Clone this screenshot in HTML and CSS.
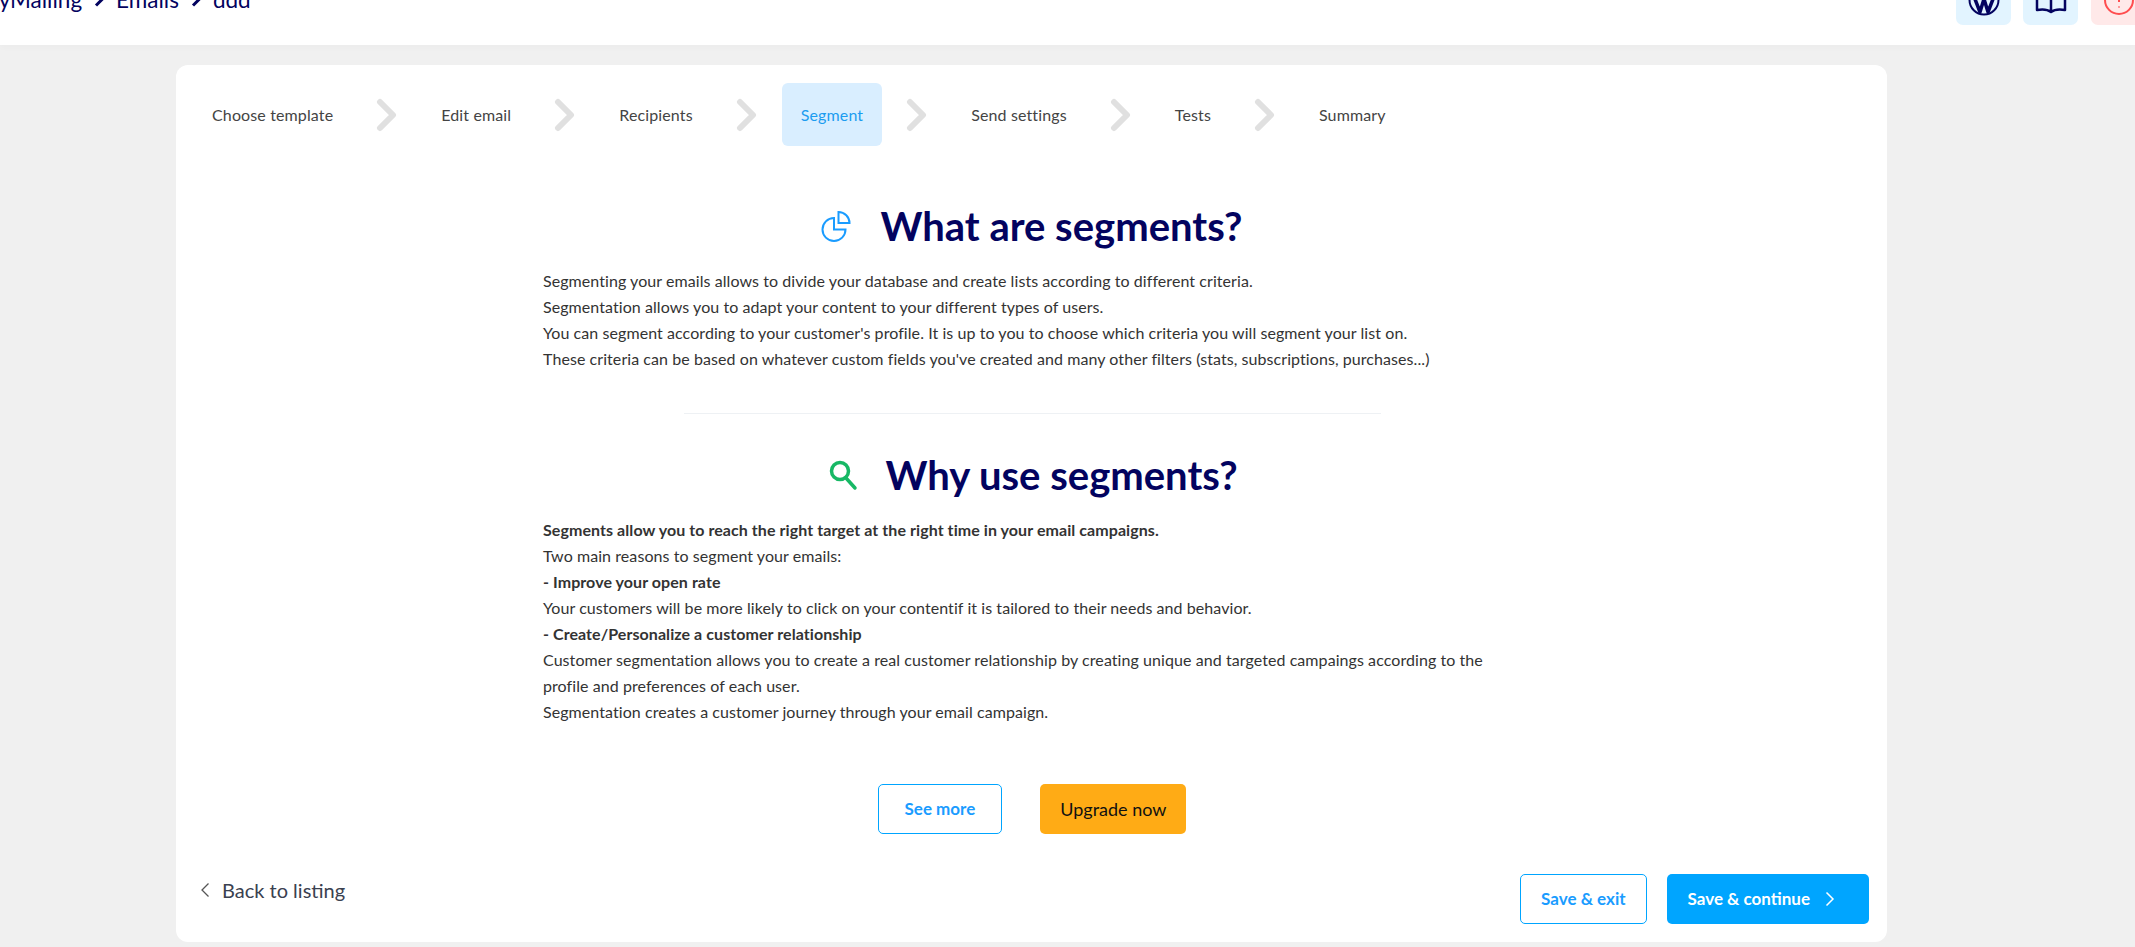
FILE: index.html
```html
<!DOCTYPE html>
<html lang="en">
<head>
    <meta charset="UTF-8">
    <title>Segment</title>
    <link rel="stylesheet" href="styles.css">
</head>
<body>

<header class="topbar">
    <div class="crumbs">
        <span>MyMailing</span>
        <svg class="crumb-sep" viewBox="0 0 10 14"><path d="M2 1.5 7.5 7 2 12.5"/></svg>
        <span>Emails</span>
        <svg class="crumb-sep" viewBox="0 0 10 14"><path d="M2 1.5 7.5 7 2 12.5"/></svg>
        <span>ddd</span>
    </div>
    <div class="top-actions">
        <a class="top-btn">
            <svg viewBox="0 0 32 32" class="ico-navy">
                <circle cx="16" cy="16" r="14.5"/>
                <path class="wp" d="M5 10 12 28 16 15 20 28 27 10M8 10h7M18 10h6"/>
            </svg>
        </a>
        <a class="top-btn">
            <svg viewBox="0 0 32 32" class="ico-navy">
                <path class="thick" d="M16 7C12 3 6 3 2 4v22c5-1 10-1 14 2 4-3 9-3 14-2V4c-4-1-10-1-14 3zM16 7v21"/>
            </svg>
        </a>
        <a class="top-btn top-btn-red">
            <svg viewBox="0 0 32 32" class="ico-red">
                <circle cx="16" cy="16" r="14"/>
                <path class="dots" d="M16 9v9M16 22.5v1"/>
            </svg>
        </a>
    </div>
</header>

<main class="card">
    <nav class="steps">
        <div class="step">Choose template</div>
        <svg class="step-sep" viewBox="0 0 22 34"><path d="M4 4 17 17 4 30"/></svg>
        <div class="step">Edit email</div>
        <svg class="step-sep" viewBox="0 0 22 34"><path d="M4 4 17 17 4 30"/></svg>
        <div class="step">Recipients</div>
        <svg class="step-sep" viewBox="0 0 22 34"><path d="M4 4 17 17 4 30"/></svg>
        <div class="step step-active">Segment</div>
        <svg class="step-sep" viewBox="0 0 22 34"><path d="M4 4 17 17 4 30"/></svg>
        <div class="step">Send settings</div>
        <svg class="step-sep" viewBox="0 0 22 34"><path d="M4 4 17 17 4 30"/></svg>
        <div class="step">Tests</div>
        <svg class="step-sep" viewBox="0 0 22 34"><path d="M4 4 17 17 4 30"/></svg>
        <div class="step">Summary</div>
    </nav>

    <section class="intro">
        <h2 class="intro-title">
            <svg class="title-icon" viewBox="0 0 30 32">
                <path class="ico-blue" d="M13 8A11.5 11.5 0 1 0 24.500 19.500H13Z"/>
                <path class="ico-blue" d="M17.500 2A11 11 0 0 1 28.500 13H17.500Z"/>
            </svg>
            What are segments?
        </h2>
        <p>Segmenting your emails allows to divide your database and create lists according to different criteria.<br>
        Segmentation allows you to adapt your content to your different types of users.<br>
        You can segment according to your customer's profile. It is up to you to choose which criteria you will segment your list on.<br>
        These criteria can be based on whatever custom fields you've created and many other filters (stats, subscriptions, purchases...)</p>

        <hr class="divider">

        <h2 class="intro-title">
            <svg class="title-icon" viewBox="0 0 30 32">
                <circle class="ico-green" cx="14" cy="12" r="8.500"/>
                <path class="ico-green" d="M20 19 29 29"/>
            </svg>
            Why use segments?
        </h2>
        <p><strong>Segments allow you to reach the right target at the right time in your email campaigns.</strong><br>
        Two main reasons to segment your emails:<br>
        <strong>- Improve your open rate</strong><br>
        Your customers will be more likely to click on your contentif it is tailored to their needs and behavior.<br>
        <strong>- Create/Personalize a customer relationship</strong><br>
        Customer segmentation allows you to create a real customer relationship by creating unique and targeted campaings according to the profile and preferences of each user.<br>
        Segmentation creates a customer journey through your email campaign.</p>

        <div class="intro-actions">
            <a class="btn btn-outline btn-more">See more</a>
            <a class="btn btn-orange">Upgrade now</a>
        </div>
    </section>

    <footer class="card-footer">
        <a class="back-link">
            <svg viewBox="0 0 10 16"><path d="M8.500 1.500 2 8l6.500 6.500"/></svg>
            Back to listing
        </a>
        <div class="footer-actions">
            <a class="btn btn-outline btn-exit">Save &amp; exit</a>
            <a class="btn btn-primary">
                Save &amp; continue
                <svg viewBox="0 0 10 16"><path d="M1.500 1.500 8 8l-6.500 6.500"/></svg>
            </a>
        </div>
    </footer>
</main>

</body>
</html>
```

FILE: styles.css
```css
* {
    box-sizing: border-box;
}
html, body {
    height: 100%;
}
body {
    margin: 0;
    overflow: hidden;
    background-color: #f0f0f0;
    color: #333;
    font-family: Lato, "Liberation Sans", sans-serif;
    font-size: 16px;
    line-height: 26px;
}
svg path, svg circle {
    fill: none;
}

.topbar {
    display: flex;
    justify-content: space-between;
    align-items: flex-end;
    height: 45px;
    padding-bottom: 20px;
    background: #fff;
    overflow: hidden;
    box-shadow: 0 3px 6px rgba(0,0,0,0.02);
}
.crumbs {
    display: flex;
    align-items: center;
    gap: 12px;
    margin-left: -22px;
    margin-bottom: 15px;
    color: #03035f;
    font-size: 22.5px;
    line-height: 20px;
}
.crumb-sep {
    width: 10px;
    height: 14px;
}
.crumb-sep path {
    stroke: #03035f;
    stroke-width: 3;
}
.top-actions {
    display: flex;
    align-items: flex-end;
    gap: 12px;
    margin-right: -11px;
}
.top-btn {
    display: flex;
    justify-content: center;
    width: 55px;
    height: 55px;
    padding-top: 14px;
    background: #e2f4ff;
    border-radius: 7px;
}
.top-btn svg {
    width: 32px;
    height: 32px;
}
.top-btn-red {
    background: #ffe9e9;
    margin-left: 1px;
}
.ico-navy circle, .ico-navy path {
    stroke: #03035f;
    stroke-width: 2;
}
.ico-navy .thick {
    stroke-width: 2.500;
    stroke-linejoin: round;
}
.ico-navy .wp {
    stroke-width: 3.500;
    stroke-linejoin: round;
}
.ico-red circle {
    stroke: #ff4d4f;
    stroke-width: 2;
}
.ico-red path {
    stroke: #ff4d4f;
    stroke-width: 2;
}

/* main card */
.card {
    width: 1711px;
    height: 877px;
    margin: 20px 0 0 176px;
    padding: 18px 18px 18px 17px;
    background: #fff;
    border-radius: 12px;
    display: flex;
    flex-direction: column;
}
.steps {
    display: flex;
    align-items: center;
    gap: 24px;
}
.step {
    height: 63px;
    padding: 0 19px;
    display: flex;
    align-items: center;
    border-radius: 6px;
    color: #444;
    letter-spacing: 0.13px;
}
.step-active {
    background: #d9eeff;
    color: #1c9cf0;
}
.step-sep {
    width: 22px;
    height: 34px;
}
.step-sep path {
    stroke: #e0e0e0;
    stroke-width: 6;
    stroke-linecap: round;
    stroke-linejoin: round;
}

.intro {
    width: 978px;
    margin: 56px 0 0 350px;
}
.intro p {
    margin: 0;
    letter-spacing: 0.07px;
}
.intro-title {
    display: flex;
    justify-content: center;
    align-items: center;
    gap: 29px;
    margin: 0 0 18px;
    color: #03035f;
    font-size: 40px;
    font-weight: 700;
    line-height: 48px;
}
.title-icon {
    width: 30px;
    height: 32px;
    overflow: visible;
}
.ico-blue {
    stroke: #1a9cff;
    stroke-width: 2;
}
.ico-green {
    stroke: #17b865;
    stroke-width: 3.500;
    stroke-linecap: round;
}
.divider {
    width: 697px;
    height: 1px;
    margin: 41px auto 37px;
    border: 0;
    background: #eef1f4;
}
.intro-actions {
    display: flex;
    justify-content: center;
    gap: 38px;
    margin-top: 59px;
}

.btn {
    display: inline-flex;
    align-items: center;
    gap: 15px;
    height: 50px;
    border-radius: 5px;
    font-size: 17px;
    font-weight: 700;
}
.btn svg {
    width: 10px;
    height: 16px;
}
.btn svg path {
    stroke: #fff;
    stroke-width: 1.500;
}
.btn-outline {
    border: 1px solid #00a5ff;
    color: #1a9cff;
}
.btn-more {
    padding: 0 26px;
}
.btn-exit {
    padding: 0 20px;
}
.btn-orange {
    background: #ffab15;
    color: #111;
    font-size: 18px;
    font-weight: 400;
    padding: 0 20px;
}
.btn-primary {
    background: #00a5ff;
    color: #fff;
    padding: 0 34px 0 21px;
}
.card-footer {
    display: flex;
    justify-content: space-between;
    align-items: flex-start;
    margin-top: auto;
}
.back-link {
    display: flex;
    align-items: center;
    gap: 12px;
    margin: 3px 0 0 7px;
    font-size: 20px;
    line-height: 26px;
    color: #3a4150;
}
.back-link svg {
    width: 10px;
    height: 16px;
}
.back-link svg path {
    stroke: #555;
    stroke-width: 1.300;
}
.footer-actions {
    display: flex;
    gap: 20px;
}
```
